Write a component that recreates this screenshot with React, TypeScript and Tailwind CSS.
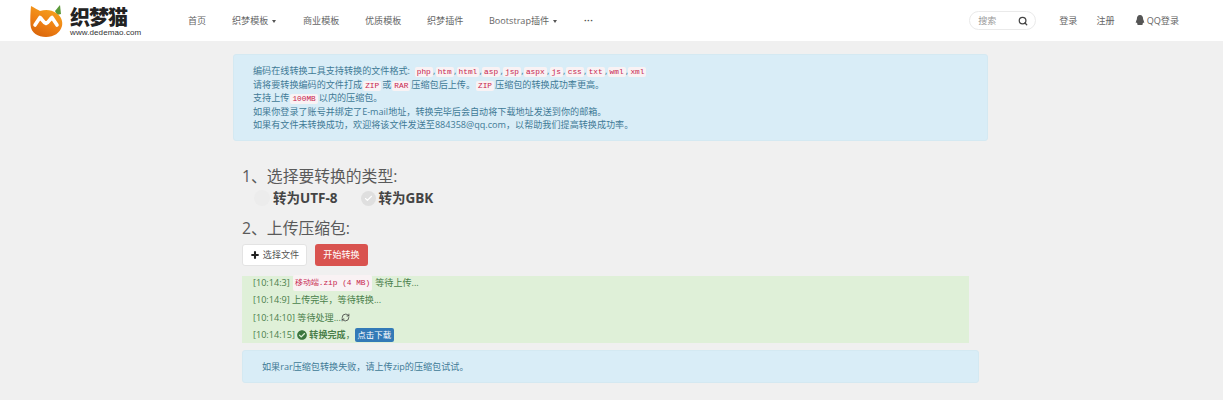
import { Plus, Search, RefreshCw, Check } from "lucide-react";
import { FaCheckCircle, FaQq } from "react-icons/fa";

const navItems = [
  { label: "首页", w: "w-[44px]" },
  { label: "织梦模板", caret: true, w: "w-[71px]" },
  { label: "商业模板", w: "w-[62px]" },
  { label: "优质模板", w: "w-[62px]" },
  { label: "织梦插件", w: "w-[62px]" },
  { label: "Bootstrap插件", caret: true, w: "w-[95px]" },
];

const formats = ["php", "htm", "html", "asp", "jsp", "aspx", "js", "css", "txt", "wml", "xml"];

function Code({ children, className = "" }: { children: React.ReactNode; className?: string }) {
  return (
    <code className={`bg-[#f9f2f4] text-[#c7254e] rounded-[2px] px-[2px] py-[1px] font-['Liberation_Mono',monospace] text-[7.8px] ${className}`}>
      {children}
    </code>
  );
}

function Caret() {
  return <span className="inline-block ml-[4px] align-middle border-x-[2.5px] border-t-[3px] border-x-transparent border-t-[#555]" />;
}

function Logo() {
  return (
    <div className="flex items-center w-[143px] ml-[30px]">
      <svg width="33" height="32" viewBox="0 0 33 32" className="shrink-0">
        <defs>
          <linearGradient id="fox" x1="0.8" y1="0" x2="0.3" y2="1">
            <stop offset="0" stopColor="#f6a821" />
            <stop offset="0.6" stopColor="#ee7f13" />
            <stop offset="1" stopColor="#d9660b" />
          </linearGradient>
        </defs>
        <path d="M25 6 L30 0 L31 9 L27 10 Z" fill="#5b9a3a" />
        <path d="M1 1 C5 3 8 5 10 6 C16 4 22 5 26 8 C31 11 33 16 32 21 C30 28 24 32 16 32 C8 32 1 28 0.5 20 C0 13 0.5 7 1 1 Z" fill="url(#fox)" />
        <path d="M5 20 L10 12.5 C12 14 13 17 16 18.5 C19 17 20 14 22 12.5 L27 20" fill="none" stroke="#fff" strokeWidth="3.6" strokeLinejoin="round" strokeLinecap="round" />
      </svg>
      <div className="ml-[7px] flex flex-col items-start">
        <div className="font-['Noto_Sans_CJK_SC',sans-serif] font-black text-[20px] leading-[24px] tracking-[-1px] text-[#222]">织梦猫</div>
        <div className="font-['Liberation_Sans',sans-serif] text-[8px] leading-[8px] tracking-[0.1px] text-[#333]">www.dedemao.com</div>
      </div>
    </div>
  );
}

export default function App() {
  return (
    <div className="h-[400px] overflow-hidden bg-[#f0f0f0] font-['Open_Sans','Noto_Sans_CJK_SC',sans-serif] text-[9.1px] text-[#555]">
      <nav className="h-[41px] bg-white flex items-center">
        <Logo />
        <ul className="flex items-center ml-[15px] text-[#666]">
          {navItems.map((item) => (
            <li key={item.label} className={`${item.w} whitespace-nowrap`}>
              {item.label}
              {item.caret && <Caret />}
            </li>
          ))}
          <li className="font-bold tracking-[0.5px] leading-[6px] mt-[2px] text-[#555]">···</li>
        </ul>
        <div className="ml-auto flex items-center mr-[44px] text-[#666]">
          <div className="w-[67px] h-[19px] rounded-full border border-[#eaeaea] flex items-center justify-between pl-[8px] pr-[7px] mr-[23px] text-[#999]">
            搜索
            <Search size={10} strokeWidth={3} className="text-[#444]" />
          </div>
          <span className="mr-[19px]">登录</span>
          <span className="mr-[20px]">注册</span>
          <span className="flex items-center">
            <FaQq size={10} className="text-[#555] mr-[2px]" />
            QQ登录
          </span>
        </div>
      </nav>

      <main className="w-[755px] ml-[233px] mt-[13px]">
        <div className="h-[87px] bg-[#d9edf7] border border-[#d4e9f2] rounded-[3px] px-[19px] pt-[9px] leading-[13.5px] text-[#3f7a96]">
          <p className="h-[13.5px]">
            编码在线转换工具支持转换的文件格式:&nbsp;&nbsp;
            {formats.map((f, i) => (
              <span key={f}>
                <Code>{f}</Code>
                {i < formats.length - 1 && <span className="mx-[0.25px]">,</span>}
              </span>
            ))}
          </p>
          <p className="h-[13.5px]">
            请将要转换编码的文件打成<Code className="mx-[1px]">ZIP</Code>或<Code className="mx-[1px]">RAR</Code>压缩包后上传。<Code className="mx-[1px]">ZIP</Code>压缩包的转换成功率更高。
          </p>
          <p className="h-[13.5px]">支持上传<Code className="mx-[1px]">100MB</Code>以内的压缩包。</p>
          <p className="h-[13.5px]">如果你登录了账号并绑定了E-mail地址，转换完毕后会自动将下载地址发送到你的邮箱。</p>
          <p className="h-[13.5px]">如果有文件未转换成功，欢迎将该文件发送至884358@qq.com，以帮助我们提高转换成功率。</p>
        </div>

        <div className="pl-[9px] mt-[23px]">
          <h3 className="text-[15.8px] leading-[24px] text-[#5a5a5a]">1、选择要转换的类型:</h3>
          <div className="flex items-center h-[20px] pl-[12px] text-[13.5px] font-bold text-[#444]">
            <span className="w-[16px] h-[16px] rounded-full bg-[#ececec] mr-[3px]" />
            <span className="mr-[23px]">转为UTF-8</span>
            <span className="w-[15px] h-[15px] rounded-full bg-[#dfdfdf] mr-[3px] flex items-center justify-center">
              <Check size={9} strokeWidth={3} className="text-white" />
            </span>
            <span>转为GBK</span>
          </div>
          <h3 className="text-[15.8px] leading-[24px] mt-[8px] text-[#5a5a5a]">2、上传压缩包:</h3>
          <div className="flex mt-[4px] gap-[8px]">
            <button className="w-[65px] h-[22px] bg-white border border-[#e3e3e3] rounded-[3px] flex items-center justify-center text-[#555]">
              <Plus size={10} strokeWidth={5} className="text-[#222] mr-[3px]" />
              选择文件
            </button>
            <button className="w-[53px] h-[22px] bg-[#d9534f] rounded-[3px] text-white">开始转换</button>
          </div>
          <div className="w-[727px] h-[67px] bg-[#dff0d8] mt-[10px] pl-[11px] text-[#4a7f4b] leading-[14px] flex flex-col gap-[3.3px]">
            <p className="h-[14px] flex items-center">
              [10:14:3]
              <Code className="ml-[3px] mr-[3px]"><span className="text-[8.3px]">移动端</span>.zip (4 MB)</Code>
              等待上传...
            </p>
            <p className="h-[14px] flex items-center">[10:14:9] 上传完毕，等待转换...</p>
            <p className="h-[14px] flex items-center">[10:14:10] 等待处理...<RefreshCw size={9} className="text-[#333]" /></p>
            <p className="h-[14px] flex items-center">
              [10:14:15]&nbsp;
              <FaCheckCircle size={10} className="text-[#3c763d] mr-[2px]" />
              <b>转换完成</b>，
              <span className="bg-[#337ab7] text-white rounded-[2px] px-[2.5px] h-[14px] leading-[14px] text-[8.5px]">点击下载</span>
            </p>
          </div>
          <div className="w-[737px] h-[33px] bg-[#d9edf7] border border-[#d4e9f2] rounded-[3px] mt-[7px] pl-[19px] flex items-center text-[#3f7a96]">
            如果rar压缩包转换失败，请上传zip的压缩包试试。
          </div>
        </div>
      </main>
    </div>
  );
}
